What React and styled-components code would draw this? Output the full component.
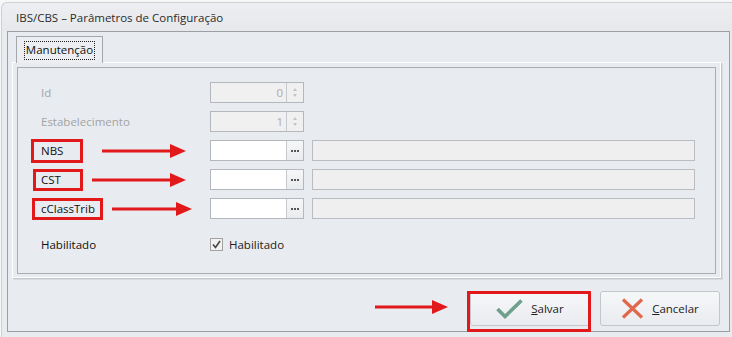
import React from "react";
import styled, { createGlobalStyle } from "styled-components";

const Global = createGlobalStyle`
  html, body { margin: 0; padding: 0; background: #f7f7f7; }
  body { font-family: "Open Sans", "Noto Sans", sans-serif; font-size: 11.5px; color: #1a1a1a; }
`;

const Root = styled.div`
  position: relative;
  width: 732px;
  height: 337px;
  overflow: hidden;
  padding: 2px 0 0 1px;
  box-sizing: border-box;
`;

const Window = styled.div`
  box-sizing: border-box;
  height: 340px;
  border: 1px solid #cdd0d4;
  border-right: none;
  border-top-left-radius: 6px;
  background: #e8ebf0;
  padding: 0 0 0 5px;
  display: flex;
  flex-direction: column;
`;

const TitleBar = styled.div`
  height: 28px;
  display: flex;
  align-items: center;
  color: #2b2b2b;
  font-size: 11.5px;
  background: linear-gradient(#edeef1, #e6e8ec);
  margin-left: -5px;
  padding-left: 14px;
  border-top-left-radius: 6px;
`;

const Panel = styled.div`
  box-sizing: border-box;
  width: 723px;
  height: 301px;
  border: 1px solid #9b9fa4;
  padding: 4px 0 0 4px;
  display: flex;
  flex-direction: column;
`;

const TabStrip = styled.div`
  display: flex;
  padding-left: 4px;
  height: 26px;
  position: relative;
  z-index: 1;
`;

const Tab = styled.div`
  box-sizing: border-box;
  width: 87px;
  height: 27px;
  border: 1px solid #a4a8ad;
  border-bottom: none;
  background: #eceef2;
  display: flex;
  align-items: center;
  justify-content: center;
`;

const TabLabel = styled.span`
  outline: 1px dotted #222;
  outline-offset: 0px;
  padding: 1px 1px 2px;
  line-height: 14px;
  color: #111;
`;

const Page = styled.div`
  box-sizing: border-box;
  width: 709px;
  height: 216px;
  border: 1px solid #ffffff;
  box-shadow: 1px 1px 0 #c3c7cc, 2px 2px 0 #d8dbe0;
  padding: 4px;
`;

const Inner = styled.div`
  box-sizing: border-box;
  width: 699px;
  height: 207px;
  border: 1px solid #a9adb2;
  padding: 14px 20px 0 23px;
  display: flex;
  flex-direction: column;
  gap: 8px;
`;

const Row = styled.div`
  display: flex;
  align-items: center;
  height: 21px;
  margin-top: ${(p) => p.$mt || 0}px;
`;

const Label = styled.div`
  width: 169px;
  color: ${(p) => (p.$disabled ? "#a3a3a3" : "#111")};
`;

const FieldBox = styled.div`
  box-sizing: border-box;
  width: 94px;
  height: 21px;
  display: flex;
  border: 1px solid #b4b8bd;
  background: ${(p) => (p.$disabled ? "#f0f0f0" : "#ffffff")};
`;

const FieldValue = styled.div`
  flex: 1;
  text-align: right;
  padding-right: 3px;
  line-height: 19px;
  color: #b0aaa5;
`;

const Spin = styled.div`
  width: 16px;
  border-left: 1px solid #c6c9cd;
  display: flex;
  flex-direction: column;
  align-items: center;
  justify-content: center;
  gap: 3px;
`;

const Tri = styled.div`
  width: 0;
  height: 0;
  border-left: 2.5px solid transparent;
  border-right: 2.5px solid transparent;
  ${(p) => (p.$up ? "border-bottom: 3px solid #c4c4c4;" : "border-top: 3px solid #c4c4c4;")}
`;

const Dots = styled.div`
  width: 16px;
  border-left: 1px solid #c6c9cd;
  background: linear-gradient(#f6f7f8, #e9ebee);
  display: flex;
  align-items: center;
  justify-content: center;
  gap: 1px;
`;

const Dot = styled.span`
  width: 2px;
  height: 2px;
  background: #555;
`;

const Desc = styled.div`
  box-sizing: border-box;
  margin-left: 8px;
  flex: 1;
  height: 21px;
  border: 1px solid #b9bdc1;
  background: #efefef;
`;

const Check = styled.div`
  box-sizing: border-box;
  width: 13px;
  height: 13px;
  border: 1px solid #a2a2a2;
  background: #f1f1f1;
  display: flex;
  align-items: center;
  justify-content: center;
  margin-right: 6px;
`;

const CheckText = styled.span`
  color: #222;
`;

const ButtonBar = styled.div`
  display: flex;
  justify-content: flex-end;
  gap: 10px;
  padding: 13px 9px 0 0;
`;

const Button = styled.button`
  box-sizing: border-box;
  width: 120px;
  height: 35px;
  border: 1px solid #c3c7cc;
  border-radius: 3px;
  background: linear-gradient(#f6f7f9, #e9ebef);
  display: flex;
  align-items: center;
  justify-content: center;
  gap: 8px;
  font: inherit;
  font-size: 11.5px;
  color: #222;
  padding: 0;
`;

const Box = styled.div`
  position: absolute;
  box-sizing: border-box;
  border: 3px solid #e2191b;
  pointer-events: none;
`;

const ArrowWrap = styled.svg`
  position: absolute;
  overflow: visible;
`;

const Arrow = ({ x1, x2, y }) => (
  <ArrowWrap
    style={{ left: x1, top: y - 8, width: x2 - x1, height: 16 }}
    viewBox={`0 0 ${x2 - x1} 16`}
  >
    <line x1="0" y1="8" x2={x2 - x1 - 14} y2="8" stroke="#e2191b" strokeWidth="3" />
    <polygon points={`${x2 - x1 - 16},1 ${x2 - x1},8 ${x2 - x1 - 16},15`} fill="#e2191b" />
  </ArrowWrap>
);

const SpinField = ({ value }) => (
  <FieldBox $disabled>
    <FieldValue>{value}</FieldValue>
    <Spin>
      <Tri $up />
      <Tri />
    </Spin>
  </FieldBox>
);

const LookupField = () => (
  <>
    <FieldBox>
      <FieldValue />
      <Dots>
        <Dot />
        <Dot />
        <Dot />
      </Dots>
    </FieldBox>
    <Desc />
  </>
);

export default function App() {
  return (
    <>
      <Global />
      <Root>
        <Window>
          <TitleBar>IBS/CBS – Parâmetros de Configuração</TitleBar>
          <Panel>
            <TabStrip>
              <Tab>
                <TabLabel>Manutenção</TabLabel>
              </Tab>
            </TabStrip>
            <Page>
              <Inner>
                <Row>
                  <Label $disabled>Id</Label>
                  <SpinField value="0" />
                </Row>
                <Row>
                  <Label $disabled>Estabelecimento</Label>
                  <SpinField value="1" />
                </Row>
                <Row>
                  <Label>NBS</Label>
                  <LookupField />
                </Row>
                <Row>
                  <Label>CST</Label>
                  <LookupField />
                </Row>
                <Row>
                  <Label>cClassTrib</Label>
                  <LookupField />
                </Row>
                <Row $mt={7}>
                  <Label>Habilitado</Label>
                  <Check>
                    <svg width="9" height="9" viewBox="0 0 9 9">
                      <path d="M1 4.5 L3.5 7.5 L8 1" stroke="#444" strokeWidth="1.6" fill="none" />
                    </svg>
                  </Check>
                  <CheckText>Habilitado</CheckText>
                </Row>
              </Inner>
            </Page>
            <ButtonBar>
              <Button>
                <svg width="27" height="20" viewBox="0 0 27 20">
                  <path d="M1.5 10 L9 17.5 L25.5 1.5" stroke="#6ea08b" strokeWidth="3.6" fill="none" />
                </svg>
                <span>
                  <u>S</u>alvar
                </span>
              </Button>
              <Button>
                <svg width="23" height="21" viewBox="0 0 23 21">
                  <path d="M2 1.5 L21 19.5 M21 1.5 L2 19.5" stroke="#e0694d" strokeWidth="3.2" fill="none" />
                </svg>
                <span>
                  <u>C</u>ancelar
                </span>
              </Button>
            </ButtonBar>
          </Panel>
        </Window>

        <Box style={{ left: 31, top: 139, width: 52, height: 24 }} />
        <Box style={{ left: 33, top: 169, width: 50, height: 22 }} />
        <Box style={{ left: 32, top: 198, width: 71, height: 22 }} />
        <Box style={{ left: 467, top: 291, width: 124, height: 41 }} />
        <Arrow x1={102} x2={186} y={151} />
        <Arrow x1={92} x2={186} y={180} />
        <Arrow x1={112} x2={192} y={209} />
        <Arrow x1={375} x2={448} y={307} />
      </Root>
    </>
  );
}
